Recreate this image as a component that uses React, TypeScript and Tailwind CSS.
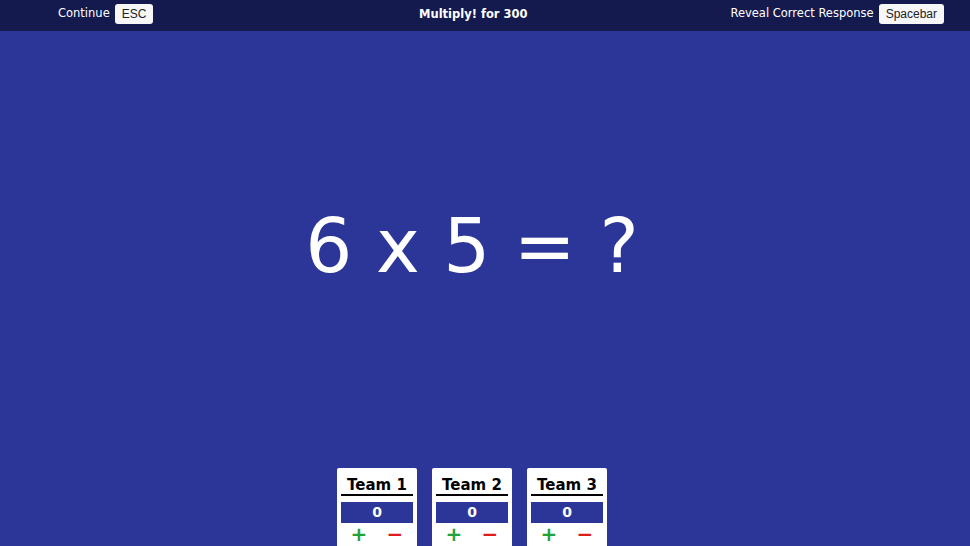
const teams = ["Team 1", "Team 2", "Team 3"];

function KeyButton({ label }: { label: string }) {
  return (
    <button className="h-5 px-[7px] bg-[#f7f7f7] rounded-[3px] text-[12px] leading-5 text-[#222] font-['Liberation_Sans',Arial,sans-serif]">
      {label}
    </button>
  );
}

function TeamCard({ name }: { name: string }) {
  return (
    <div className="w-[80px] h-[100px] bg-white rounded-t-[2px] px-1 pt-[8px]">
      <div className="text-center text-[15px] font-bold leading-[18px] text-black border-b-2 border-black">
        {name}
      </div>
      <div className="mt-[6px] h-[21px] bg-[#2c3698] text-white text-[14px] font-bold leading-[21px] text-center">
        0
      </div>
      <div className="flex">
        <button className="flex-1 text-[#22a33a] text-[20px] font-bold leading-[22px]">+</button>
        <button className="flex-1 text-[#e01b1b] text-[20px] font-bold leading-[22px]">−</button>
      </div>
    </div>
  );
}

export default function App() {
  return (
    <div className="w-[970px] h-[546px] overflow-hidden bg-[#2c3698] font-['DejaVu_Sans',Verdana,sans-serif] flex flex-col">
      {/* Header */}
      <div className="h-[31px] bg-[#141a4e] shrink-0">
        <div className="w-[944px] h-full flex items-start pt-[4px] pl-[58px]">
          <div className="flex items-center gap-[5px] w-[361px]">
            <span className="text-white text-[11.5px]">Continue</span>
            <KeyButton label="ESC" />
          </div>
          <div className="text-white text-[11.5px] leading-5 font-bold">Multiply! for 300</div>
          <div className="flex-1 flex items-center justify-end gap-[5px]">
            <span className="text-white text-[11.5px]">Reveal Correct Response</span>
            <KeyButton label="Spacebar" />
          </div>
        </div>
      </div>

      {/* Question */}
      <div className="w-[944px] flex flex-col items-center">
        <div className="mt-[170px] text-white text-[74px] leading-[90px]">6 x 5 = ?</div>
        <div className="mt-[177px] flex gap-[15px]">
          {teams.map((t) => (
            <TeamCard key={t} name={t} />
          ))}
        </div>
      </div>
    </div>
  );
}
